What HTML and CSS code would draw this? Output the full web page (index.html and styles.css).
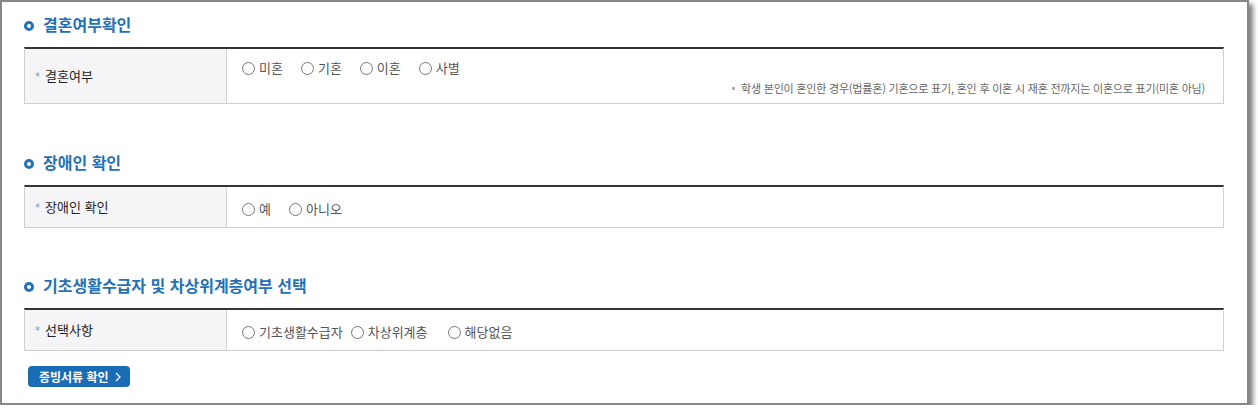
FILE: index.html
```html
<!DOCTYPE html>
<html lang="ko">
<head>
    <meta charset="UTF-8">
    <meta name="viewport" content="width=device-width, initial-scale=1.0">
    <title>결혼여부확인</title>
    <link rel="stylesheet" href="styles.css">
</head>
<body>
    <div class="panel">
        <section class="section">
            <h3 class="sec-title"><span class="sec-dot"></span>결혼여부확인</h3>
            <div class="form-table">
                <div class="form-row">
                    <div class="form-label"><span class="req">*</span>결혼여부</div>
                    <div class="form-value value-top">
                        <div class="radio-group">
                            <label class="radio-item"><input type="radio" name="marry">미혼</label>
                            <label class="radio-item"><input type="radio" name="marry">기혼</label>
                            <label class="radio-item"><input type="radio" name="marry">이혼</label>
                            <label class="radio-item"><input type="radio" name="marry">사별</label>
                        </div>
                        <p class="note">학생 본인이 혼인한 경우(법률혼) 기혼으로 표기, 혼인 후 이혼 시 재혼 전까지는 이혼으로 표기(미혼 아님)</p>
                    </div>
                </div>
            </div>
        </section>

        <section class="section">
            <h3 class="sec-title"><span class="sec-dot"></span>장애인 확인</h3>
            <div class="form-table">
                <div class="form-row row-short">
                    <div class="form-label"><span class="req">*</span>장애인 확인</div>
                    <div class="form-value">
                        <div class="radio-group">
                            <label class="radio-item"><input type="radio" name="disabled">예</label>
                            <label class="radio-item"><input type="radio" name="disabled">아니오</label>
                        </div>
                    </div>
                </div>
            </div>
        </section>

        <section class="section section-last">
            <h3 class="sec-title"><span class="sec-dot"></span>기초생활수급자 및 차상위계층여부 선택</h3>
            <div class="form-table">
                <div class="form-row row-short">
                    <div class="form-label"><span class="req">*</span>선택사항</div>
                    <div class="form-value">
                        <div class="radio-group">
                            <label class="radio-item tight"><input type="radio" name="welfare">기초생활수급자</label>
                            <label class="radio-item wide"><input type="radio" name="welfare">차상위계층</label>
                            <label class="radio-item"><input type="radio" name="welfare">해당없음</label>
                        </div>
                    </div>
                </div>
            </div>
        </section>

        <button type="button" class="btn-doc">증빙서류 확인
            <svg width="6" height="10" viewBox="0 0 6 10"><polyline points="1,1 5,5 1,9" fill="none" stroke="#fff" stroke-width="1.3"/></svg>
        </button>
    </div>
</body>
</html>
```

FILE: styles.css
```css
body {
    margin: 0;
    font-family: "Noto Sans CJK KR", "Noto Sans", sans-serif;
    background: #fff;
    color: #222;
}
.panel {
    width: 1200px;
    padding: 12px 23px 16px 22px;
    border: 2px solid #868686;
    background: #fff;
    box-shadow: 4px 4px 5px rgba(0, 0, 0, 0.5);
}
.section + .section {
    margin-top: 48px;
}
.section-last {
    margin-top: 47px !important;
}
.sec-title {
    display: flex;
    align-items: center;
    gap: 9px;
    height: 20px;
    margin: 0 0 13px;
    font-size: 16px;
    font-weight: 700;
    color: #2571b5;
}
.sec-dot {
    width: 10px;
    height: 10px;
    box-sizing: border-box;
    border: 3px solid #2571b5;
    border-radius: 50%;
    margin-top: 3px;
}
.form-table {
    border-top: 2px solid #333338;
    border-left: 1px solid #cfcfcf;
    border-right: 1px solid #cfcfcf;
}
.form-row {
    display: grid;
    grid-template-columns: 202px 1fr;
    border-bottom: 1px solid #cfcfcf;
}
.row-short {
    height: 40px;
}
.form-label {
    display: flex;
    align-items: center;
    padding: 0 0 2px 10px;
    background: #f5f5f7;
    border-right: 1px solid #d4d4d4;
    font-size: 13px;
    color: #222;
}
.req {
    font-family: "DejaVu Sans", sans-serif;
    font-size: 10px;
    line-height: 1;
    color: #6f9ad4;
    margin: 4px 5px 0 0;
}
.form-value {
    display: flex;
    flex-direction: column;
    justify-content: center;
    padding: 4px 18px 0 15px;
}
.value-top {
    justify-content: flex-start;
    padding-top: 10px;
    padding-bottom: 8px;
}
.radio-group {
    display: flex;
    height: 18px;
}
.radio-item {
    display: inline-flex;
    align-items: center;
    gap: 4px;
    margin-right: 18px;
    font-size: 13px;
    line-height: 18px;
    color: #555;
}
.radio-item.tight {
    margin-right: 8px;
}
.radio-item.wide {
    margin-right: 20px;
}
.radio-item input {
    appearance: none;
    -webkit-appearance: none;
    width: 13px;
    height: 13px;
    margin: 0;
    border: 1px solid #777;
    border-radius: 50%;
    background: #fff;
}
.note {
    margin: 4px 0 0;
    align-self: flex-end;
    display: flex;
    align-items: center;
    gap: 6px;
    font-size: 11px;
    line-height: 14px;
    letter-spacing: -0.2px;
    color: #666;
}
.note::before {
    content: "";
    width: 3px;
    height: 3px;
    background: #b0b0b0;
}
.btn-doc {
    display: inline-flex;
    align-items: center;
    gap: 6px;
    height: 21px;
    width: 102px;
    margin: 15px 0 0 4px;
    padding: 0 0 0 11px;
    border: none;
    border-radius: 4px;
    background: #1a6db4;
    color: #fff;
    font-family: "Noto Sans CJK KR", sans-serif;
    font-size: 12px;
    font-weight: 700;
    cursor: pointer;
}
```
